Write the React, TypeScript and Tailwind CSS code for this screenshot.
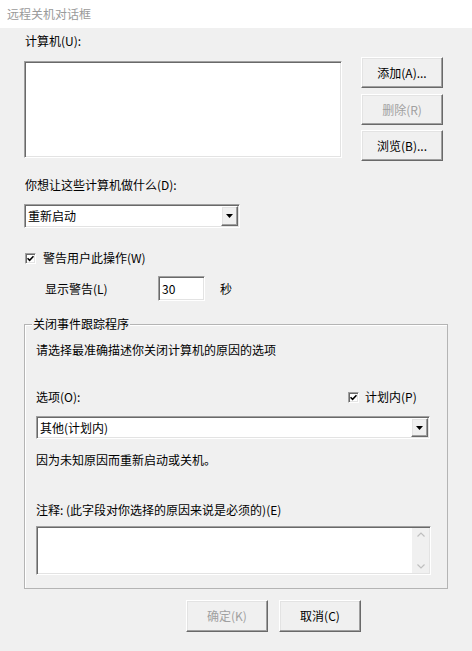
import React from "react";

const font = { fontFamily: '"Noto Sans CJK SC", "Noto Sans", sans-serif' };

// sunken 3D edge used by list/edit/combo fields
const sunken =
  "border-t border-l border-t-[#a0a0a0] border-l-[#a0a0a0] border-b border-r border-b-white border-r-white shadow-[inset_1px_1px_0_#696969,inset_-1px_-1px_0_#e3e3e3]";

// raised 3D edge for push buttons
const raised =
  "border-t border-l border-t-white border-l-white border-b border-r border-b-[#696969] border-r-[#696969] shadow-[inset_-1px_-1px_0_#a0a0a0,inset_1px_1px_0_#e3e3e3]";

function PushButton({ label, disabled, className }: { label: string; disabled?: boolean; className?: string }) {
  return (
    <div
      className={`${raised} bg-[#f0f0f0] flex items-center justify-center text-[12px] ${
        disabled ? "text-[#a0a0a0]" : "text-black"
      } ${className ?? ""}`}
    >
      {label}
    </div>
  );
}

function CheckBox() {
  return (
    <div className={`${sunken} w-[11px] h-[11px] bg-white flex items-center justify-center`}>
      <svg width="7" height="7" viewBox="0 0 7 7">
        <path d="M0.5 3.2 L2.6 5.3 L6.5 1.2" fill="none" stroke="#000" strokeWidth="1.6" />
      </svg>
    </div>
  );
}

function Combo({ value, className }: { value: string; className?: string }) {
  return (
    <div className={`${sunken} bg-white flex items-stretch ${className ?? ""}`}>
      <div className="flex-1 pl-[3px] flex items-center text-[12px] text-black">{value}</div>
      <div className={`${raised} w-[17px] bg-[#f0f0f0] flex items-center justify-center m-[1px]`}>
        <svg width="7" height="4" viewBox="0 0 7 4">
          <path d="M0 0 H7 L3.5 4 Z" fill="#000" />
        </svg>
      </div>
    </div>
  );
}

export default function App() {
  return (
    <div className="w-[472px] h-[651px] bg-[#f0f0f0] overflow-hidden" style={font}>
      {/* 标题栏 */}
      <div className="h-[28px] bg-white flex items-center pl-[7px] text-[12px] text-[#9a9a9a]">远程关机对话框</div>

      <div className="px-[24px]">
        <div className="mt-[5px] pl-[1px] text-[12px] leading-[16px] text-black">计算机(U):</div>

        <div className="mt-[8px] flex items-start">
          <div className={`${sunken} mt-[4px] w-[318px] h-[97px] bg-white`} />
          <div className="ml-[19px] flex flex-col">
            <PushButton label="添加(A)..." className="w-[82px] h-[31px]" />
            <PushButton label="删除(R)" disabled className="w-[82px] h-[31px] mt-[6px]" />
            <PushButton label="浏览(B)..." className="w-[82px] h-[31px] mt-[5px]" />
          </div>
        </div>

        <div className="mt-[16px] pl-[1px] text-[12px] leading-[16px] text-black">你想让这些计算机做什么(D):</div>
        <Combo value="重新启动" className="mt-[11px] w-[216px] h-[24px]" />

        <div className="mt-[22px] h-[16px] flex items-center pl-[1px]">
          <CheckBox />
          <span className="ml-[7px] text-[12px] text-black">警告用户此操作(W)</span>
        </div>

        <div className="mt-[10px] flex items-center">
          <span className="ml-[21px] w-[113px] text-[12px] text-black">显示警告(L)</span>
          <div className={`${sunken} w-[47px] h-[25px] bg-white flex items-center pl-[3px] text-[12px] text-black`}>30</div>
          <span className="ml-[15px] text-[12px] text-black">秒</span>
        </div>

        {/* 关闭事件跟踪程序 */}
        <div className="relative mt-[23px] w-[424px] h-[265px] border border-[#b4b4b4] shadow-[inset_1px_1px_0_#ffffff] pl-[11px]">
          <span className="absolute -top-[9px] left-[7px] px-[1px] bg-[#f0f0f0] text-[12px] leading-[16px] text-black">
            关闭事件跟踪程序
          </span>

          <div className="mt-[17px] text-[12px] leading-[16px] text-black">请选择最准确描述你关闭计算机的原因的选项</div>

          <div className="mt-[31px] h-[16px] flex items-center">
            <span className="w-[312px] text-[12px] text-black">选项(O):</span>
            <CheckBox />
            <span className="ml-[6px] text-[12px] text-black">计划内(P)</span>
          </div>

          <Combo value="其他(计划内)" className="mt-[11px] w-[394px] h-[23px]" />

          <div className="mt-[13px] text-[12px] leading-[16px] text-black">因为未知原因而重新启动或关机。</div>

          <div className="mt-[34px] text-[12px] leading-[16px] text-black">注释: (此字段对你选择的原因来说是必须的)(E)</div>

          <div className={`${sunken} mt-[8px] w-[395px] h-[49px] bg-white flex justify-end`}>
            <div className="w-[17px] bg-[#f0f0f0] flex flex-col items-center justify-between py-[4px] mr-[1px] my-[1px]">
              <svg width="8" height="5" viewBox="0 0 8 5">
                <path d="M0.5 4.5 L4 1 L7.5 4.5" fill="none" stroke="#bfbfbf" strokeWidth="1.2" />
              </svg>
              <svg width="8" height="5" viewBox="0 0 8 5">
                <path d="M0.5 0.5 L4 4 L7.5 0.5" fill="none" stroke="#bfbfbf" strokeWidth="1.2" />
              </svg>
            </div>
          </div>
        </div>

        <div className="mt-[11px] ml-[162px] flex gap-[11px]">
          <PushButton label="确定(K)" disabled className="w-[82px] h-[32px]" />
          <PushButton label="取消(C)" className="w-[82px] h-[32px]" />
        </div>
      </div>
    </div>
  );
}
